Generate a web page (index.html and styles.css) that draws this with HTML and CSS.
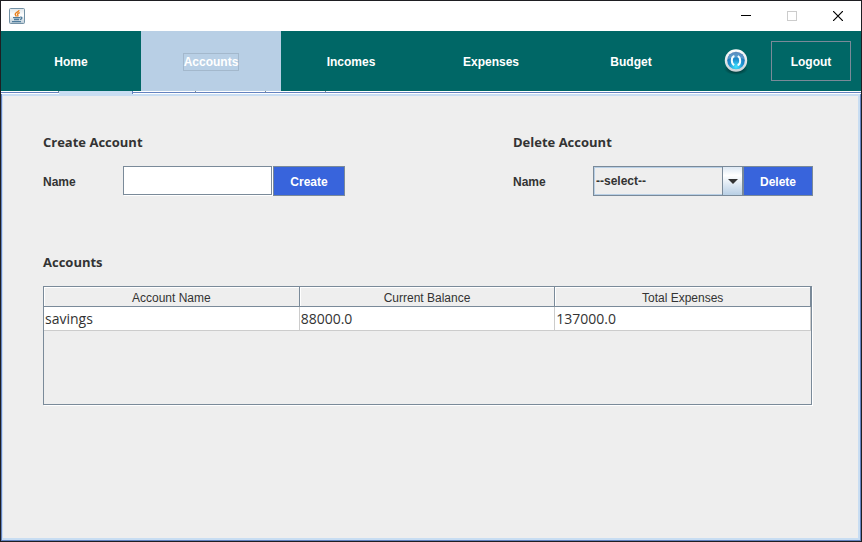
FILE: index.html
```html
<!DOCTYPE html>
<html lang="en">
<head>
  <meta charset="UTF-8">
  <meta name="viewport" content="width=device-width, initial-scale=1.0">
  <title>Accounts</title>
  <link rel="stylesheet" href="styles.css">
</head>
<body>
  <div class="window">

    <!-- Title bar -->
    <header class="title-bar">
      <svg class="app-icon" width="16" height="16" viewBox="0 0 16 16">
        <defs>
          <linearGradient id="cup-bg" x1="0" y1="0" x2="0" y2="1">
            <stop offset="0" stop-color="#dfe6ea"/>
            <stop offset=".45" stop-color="#ffffff"/>
            <stop offset="1" stop-color="#b9cad6"/>
          </linearGradient>
        </defs>
        <rect x=".5" y=".5" width="15" height="15" rx="1" fill="url(#cup-bg)" stroke="#7391a5"/>
        <path d="M10.2 2.2C9.6 4 6 4.4 6.2 6.3c.1.9 1 1.3 1.2 2.2M10.8 4.6C8.8 5.2 8.2 6 8.8 6.9c.4.6.2 1-.3 1.6" fill="none" stroke="#e8801e" stroke-width="1.4"/>
        <path d="M4 9.6h7M5 11.5h5M3 13.6h9M11.2 9.2c2.4-.3 2.2 1.8-.4 2.3" fill="none" stroke="#4f7c9c" stroke-width="1.3"/>
      </svg>
      <div class="window-controls">
        <button class="window-button" aria-label="Minimize">
          <svg width="10" height="10" viewBox="0 0 10 10"><path d="M0 4.5h10" stroke="#000"/></svg>
        </button>
        <button class="window-button" aria-label="Maximize" disabled>
          <svg width="10" height="10" viewBox="0 0 10 10"><rect x=".5" y=".5" width="9" height="9" fill="none" stroke="#ccc"/></svg>
        </button>
        <button class="window-button" aria-label="Close">
          <svg width="10" height="10" viewBox="0 0 10 10"><path d="M0 0l10 10M10 0L0 10" stroke="#000" stroke-width="1.2"/></svg>
        </button>
      </div>
    </header>

    <!-- Main navigation -->
    <nav class="nav">
      <button class="nav-button">Home</button>
      <button class="nav-button active"><span class="focus-ring">Accounts</span></button>
      <button class="nav-button">Incomes</button>
      <button class="nav-button">Expenses</button>
      <button class="nav-button">Budget</button>
      <div class="nav-actions">
        <button class="refresh" aria-label="Refresh">
          <svg width="28" height="28" viewBox="0 0 28 28">
            <defs>
              <radialGradient id="glow" cx=".5" cy=".85" r=".8">
                <stop offset="0" stop-color="#3fe4ff"/>
                <stop offset=".5" stop-color="#1d8fd0"/>
                <stop offset="1" stop-color="#2466a8"/>
              </radialGradient>
              <linearGradient id="rim" x1="0" y1="0" x2="0" y2="1">
                <stop offset="0" stop-color="#ffffff"/>
                <stop offset="1" stop-color="#c9d1d5"/>
              </linearGradient>
              <radialGradient id="shade">
                <stop offset=".5" stop-color="#002e2e" stop-opacity=".7"/>
                <stop offset="1" stop-color="#002e2e" stop-opacity="0"/>
              </radialGradient>
            </defs>
            <ellipse cx="14" cy="22" rx="12" ry="6" fill="url(#shade)"/>
            <circle cx="14" cy="13.5" r="11.2" fill="url(#rim)"/>
            <circle cx="14" cy="13.5" r="8.8" fill="url(#glow)"/>
            <path d="M5.6 12a8.5 8.5 0 0 1 16.8 0Q14 9 5.6 12z" fill="#fff" opacity=".25"/>
            <path d="M12.4 9C9 10 9 16.4 12.2 18.2M15.6 18.2c3.4-1 3.4-7.4.2-9.2" fill="none" stroke="#f4fdff" stroke-width="2"/>
          </svg>
        </button>
        <button class="logout">Logout</button>
      </div>
    </nav>

    <!-- Lower edge of the tab strip -->
    <div class="tab-strip">
      <span class="tab tab-first"></span>
      <span class="tab tab-selected"></span>
      <span class="tab tab-third"></span>
      <span class="tab tab-fourth"></span>
      <span class="tab tab-fifth"></span>
      <span class="tab-rest"></span>
    </div>

    <main class="content">
      <div class="forms">
        <section>
          <h2>Create Account</h2>
          <form class="form-row">
            <label for="account-name">Name</label>
            <input class="text-field" type="text" id="account-name">
            <button class="primary create" type="button">Create</button>
          </form>
        </section>

        <section>
          <h2>Delete Account</h2>
          <form class="form-row">
            <label for="account-select">Name</label>
            <div class="combo">
              <select id="account-select">
                <option>--select--</option>
                <option>savings</option>
              </select>
              <span class="combo-arrow">
                <svg width="10" height="5" viewBox="0 0 10 5"><path d="M0 0h10L5 5z" fill="#333"/></svg>
              </span>
            </div>
            <button class="primary delete" type="button">Delete</button>
          </form>
        </section>
      </div>

      <section class="accounts">
        <h2>Accounts</h2>
        <div class="table-pane">
          <table>
            <thead>
              <tr>
                <th>Account Name</th>
                <th>Current Balance</th>
                <th>Total Expenses</th>
              </tr>
            </thead>
            <tbody>
              <tr>
                <td>savings</td>
                <td>88000.0</td>
                <td>137000.0</td>
              </tr>
            </tbody>
          </table>
        </div>
      </section>
    </main>

  </div>
</body>
</html>
```
FILE: styles.css
```css
* {
  box-sizing: border-box;
  margin: 0;
  padding: 0;
}

body {
  font-family: "Liberation Sans", Arial, sans-serif;
  font-size: 12px;
  color: #333;
  background-color: #eee;
}

button {
  font: inherit;
  border: none;
  cursor: pointer;
}

svg {
  display: block;
}

.window {
  display: flex;
  flex-direction: column;
  min-height: 100vh;
  border: 1px solid #1e1e22;
}

/* Title bar */
.title-bar {
  display: flex;
  justify-content: space-between;
  align-items: center;
  height: 30px;
  padding-left: 8px;
  background-color: #fff;
}

.window-controls {
  display: flex;
}

.window-button {
  display: flex;
  justify-content: center;
  align-items: center;
  width: 46px;
  height: 28px;
  background: none;
}

/* Navigation */
.nav {
  display: flex;
  height: 60px;
  background-color: #006766;
}

.nav-button {
  flex: 0 1 140px;
  padding-top: 2px;
  font-weight: bold;
  color: #fff;
  background: none;
}

.nav-button.active {
  background-color: #b8cfe5;
}

.focus-ring {
  display: inline-block;
  padding: 1px 0;
  border: 1px solid #a3b8cc;
}

.nav-actions {
  display: flex;
  align-items: center;
  gap: 21px;
  margin-left: auto;
  padding-right: 10px;
}

.refresh {
  background: none;
}

.logout {
  width: 80px;
  height: 40px;
  padding-top: 2px;
  font-weight: bold;
  color: #fff;
  background: none;
  border: 1px solid #7a8a99;
}

/* Tab strip */
.tab-strip {
  display: flex;
  height: 3px;
  background-color: #fff;
}

.tab {
  height: 2px;
  border-right: 1px solid #7a8a99;
  border-bottom: 1px solid #6382bf;
}

.tab-first {
  width: 58px;
}

.tab-selected {
  width: 74px;
  height: 3px;
  background-color: #c8ddf2;
  border-bottom: none;
  border-right-color: #6382bf;
}

.tab-third {
  width: 63px;
}

.tab-fourth {
  width: 70px;
}

.tab-fifth {
  width: 60px;
}

.tab-rest {
  flex: 1;
  height: 2px;
  border-bottom: 1px solid #6382bf;
}

/* Content */
.content {
  flex: 1;
  padding: 38px 47px 40px 41px;
  border: 1px solid #6382bf;
  border-top: none;
  box-shadow: inset 1px 2px #c8ddf2, inset -2px -2px #c8ddf2;
}

h2 {
  font-family: "Open Sans", "Noto Sans", sans-serif;
  font-size: 13px;
  line-height: 20px;
}

.forms {
  display: flex;
  flex-wrap: wrap;
  justify-content: space-between;
  gap: 24px;
}

.form-row {
  display: flex;
  align-items: center;
  margin-top: 14px;
  font-weight: bold;
}

.form-row label {
  width: 80px;
  padding-top: 2px;
}

.text-field {
  width: 149px;
  height: 29px;
  margin: 0 1px 1px 0;
  padding: 0 4px;
  font: inherit;
  background-color: #fff;
  border: 1px solid #7a8a99;
  border-radius: 0;
  box-shadow: 1px 1px #fff;
}

.primary {
  height: 30px;
  padding-top: 2px;
  font-weight: bold;
  color: #fff;
  background-color: #3864dc;
  border: 1px solid #7a8a99;
}

.create {
  width: 72px;
}

.delete {
  width: 70px;
}

.combo {
  position: relative;
  width: 150px;
  height: 30px;
}

.combo select {
  width: 100%;
  height: 100%;
  padding-left: 2px;
  font: inherit;
  color: #333;
  background-color: #eee;
  border: 1px solid #7a8a99;
  border-radius: 0;
  box-shadow: inset 0 0 0 1px #b8cfe5;
  appearance: none;
}

/* Arrow lies over the right end of the select */
.combo-arrow {
  position: absolute;
  top: 1px;
  right: 0;
  bottom: 1px;
  display: flex;
  justify-content: center;
  align-items: center;
  width: 21px;
  background: linear-gradient(#dde8f3, #fff 30%, #b8cfe5);
  border-left: 1px solid #7a8a99;
  border-right: 1px solid #7a8a99;
  pointer-events: none;
}

/* Accounts table */
.accounts {
  margin-top: 56px;
}

.table-pane {
  height: 119px;
  margin-top: 14px;
  margin-right: 1px;
  border: 1px solid #7a8a99;
  box-shadow: 1px 1px #fff;
  overflow: auto;
}

table {
  width: 100%;
  table-layout: fixed;
  border-collapse: separate;
  border-spacing: 0;
}

th {
  height: 20px;
  padding-top: 2px;
  font-weight: normal;
  border-right: 1px solid #7a8a99;
  border-bottom: 1px solid #7a8a99;
  box-shadow: inset 1px 1px #fff;
}

td {
  height: 24px;
  padding-left: 1px;
  font-family: "Open Sans", "Noto Sans", sans-serif;
  font-size: 14px;
  line-height: 20px;
  background-color: #fff;
  border-right: 1px solid #ccc;
  border-bottom: 1px solid #ccc;
}
```
